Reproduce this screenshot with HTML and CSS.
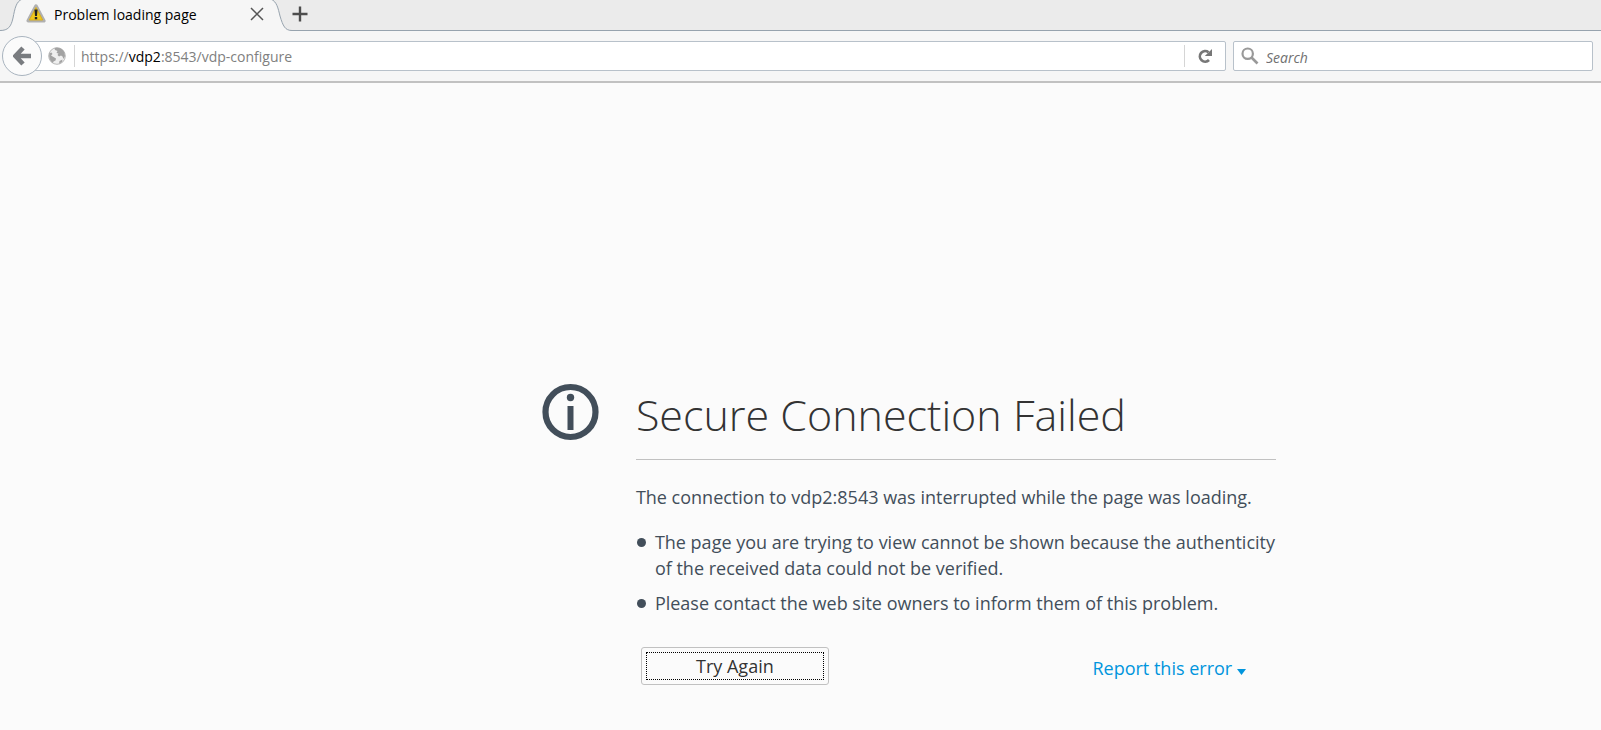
FILE: index.html
```html
<!DOCTYPE html>
<html lang="en">
<head>
<meta charset="utf-8">
<title>Problem loading page</title>
<link rel="stylesheet" href="styles.css">
</head>
<body>
<header class="chrome">
  <div class="tabstrip">
    <div class="tab">
      <svg class="tab-shape" width="300" height="31" viewBox="0 0 300 31" aria-hidden="true">
        <path fill="#f6f6f6" d="M0 31V30.500C8 30.500 10 27 13 18C15 8 16 2 22 0H271C277 2 278 8 280 16C283 26 285 30.500 292 30.500V31Z"/>
        <path fill="none" stroke="#97a3ae" d="M0 30.500C8 30.500 11 27 13 18C15 8 16 2 22 -1M271 -1C277 2 278 8 280 16C283 26 285 30.500 292 30.500H300"/>
      </svg>
      <svg class="tab-icon" width="20" height="20" viewBox="0 0 20 20" aria-hidden="true">
        <path d="M10 2.200L17.800 16.800H2.200Z" fill="#b5b5b5" stroke="#b0b0b0" stroke-width="3.600" stroke-linejoin="round"/>
        <path d="M10 3.500L16.700 16H3.300Z" fill="#f0c81c" stroke="#d9ae1d" stroke-linejoin="round"/>
        <path d="M8.500 5.500H11.500L11 12H9ZM8.800 13H11.200V15.300H8.800Z" fill="#222"/>
      </svg>
      <span class="tab-title">Problem loading page</span>
      <button class="icon-button" type="button" aria-label="Close tab">
        <svg width="14" height="14" viewBox="0 0 14 14"><path d="M1 1L13 13M13 1L1 13" stroke="#555" stroke-width="1.500" fill="none"/></svg>
      </button>
    </div>
    <button class="icon-button" type="button" aria-label="New tab">
      <svg width="16" height="16" viewBox="0 0 16 16"><path d="M8 0.500V15.500M0.500 8H15.500" stroke="#4d4d4d" stroke-width="2.400" fill="none"/></svg>
    </button>
  </div>
  <div class="toolbar">
    <button class="back" type="button" aria-label="Back">
      <svg width="18" height="20" viewBox="0 0 18 20"><path d="M10 2L2.500 10L10 18M3 10H18" fill="none" stroke="#797c80" stroke-width="4.600"/></svg>
    </button>
    <div class="urlbar">
      <svg class="globe" width="18" height="18" viewBox="0 0 18 18" aria-hidden="true">
        <circle cx="9" cy="9" r="8.300" fill="#efefef" stroke="#b8b8b8"/>
        <path fill="#a3a3a3" d="M6.500 1.200C10 0 14.500 1.500 16.300 5L17 9L15.500 12L14.500 9.500L13 8.500L11 9.500L9.500 8L10.500 6.500L8.500 6L9.500 4L7 3ZM1.500 6L3.500 5.500L4.500 7L3 8.500L5.500 10L8 11.500L7.500 13.500L5.500 14.500L5 16C2 14 0.500 10 1.500 6ZM11.500 14L14.500 12.500L14 15L11 16.800Z"/>
      </svg>
      <div class="address" role="textbox" aria-label="Address" tabindex="0">https://<span class="host">vdp2</span>:8543/vdp-configure</div>
      <button class="reload" type="button" aria-label="Reload">
        <svg width="16" height="16" viewBox="0 0 16 16"><path d="M11.500 4.200A5.300 5.300 0 1 0 12 12" fill="none" stroke="#777" stroke-width="2.700"/><path d="M15 1V8H7.800Z" fill="#777"/></svg>
      </button>
    </div>
    <label class="searchbar">
      <svg width="18" height="18" viewBox="0 0 18 18" aria-hidden="true"><circle cx="6.700" cy="6.700" r="5.200" fill="none" stroke="#999" stroke-width="2.200"/><path d="M10.500 10.500L16.500 16.500" stroke="#999" stroke-width="2.700"/></svg>
      <input class="search-input" type="search" placeholder="Search" aria-label="Search">
    </label>
  </div>
</header>
<main class="page">
  <section class="error">
    <svg class="info" width="58" height="58" viewBox="0 0 58 58" aria-hidden="true">
      <circle cx="28.500" cy="29" r="25" fill="none" stroke="#424e5a" stroke-width="6.200"/>
      <circle cx="28.500" cy="14.500" r="3.700" fill="#424e5a"/>
      <path d="M25.500 23H31.500V47H25.500Z" fill="#424e5a"/>
    </svg>
    <div class="details">
      <h1 class="title">Secure Connection Failed</h1>
      <p class="summary">The connection to vdp2:8543 was interrupted while the page was loading.</p>
      <ul class="reasons">
        <li>The page you are trying to view cannot be shown because the authenticity of the received data could not be verified.</li>
        <li>Please contact the web site owners to inform them of this problem.</li>
      </ul>
      <div class="actions">
        <button class="retry" type="button"><span class="retry-label">Try Again</span></button>
        <a class="report" href="#report">Report this error <svg width="9" height="6" viewBox="0 0 9 6" aria-hidden="true"><path d="M0 0H9L4.500 6Z" fill="#0095dd"/></svg></a>
      </div>
    </div>
  </section>
</main>
</body>
</html>
```
FILE: styles.css
```css
* {
  box-sizing: border-box;
}

body {
  margin: 0;
  background: #fbfbfb;
  color: #424e5a;
  font-family: "Open Sans", "Noto Sans", sans-serif;
  font-size: 18px;
}

button {
  margin: 0;
  padding: 0;
  border: 0;
  background: none;
  font: inherit;
}

svg {
  flex: none;
}

.chrome {
  background: #f6f6f6;
  border-bottom: 2px solid #c1c1c1;
  font-size: 14px;
}

.tabstrip {
  display: flex;
  align-items: center;
  height: 31px;
  background: #ebebeb;
  border-bottom: 1px solid #97a3ae;
}

.tab {
  position: relative;
  display: flex;
  align-items: center;
  width: 292px;
  height: 31px;
  padding: 0 28px 2px 26px;
  gap: 8px;
}

.tab-shape {
  position: absolute;
  top: 0;
  left: 0;
}

.tab-icon,
.tab-title,
.tab .icon-button {
  position: relative;
}

.tab-title {
  flex: 1;
  color: #000;
}

.icon-button {
  display: flex;
}

.tabstrip > .icon-button {
  padding-bottom: 2px;
}

.toolbar {
  display: flex;
  align-items: center;
  height: 50px;
  padding: 0 8px 0 2px;
}

.back {
  position: relative;
  display: flex;
  flex: none;
  align-items: center;
  justify-content: center;
  width: 40px;
  height: 40px;
  margin-right: -8px;
  border: 1px solid #a9b4bf;
  border-radius: 50%;
  background: #fbfbfb;
}

.urlbar,
.searchbar {
  display: flex;
  align-items: center;
  height: 30px;
  border: 1px solid #b8c1ca;
  border-radius: 2px;
  background: #fff;
}

.urlbar {
  flex: 1;
  padding-left: 13px;
  margin-right: 7px;
}

.address {
  flex: 1;
  margin-left: 8px;
  padding: 2px 0 0 6px;
  border-left: 1px solid #d5d5d5;
  color: #808080;
  line-height: 20px;
}

.host {
  color: #000;
}

.reload {
  display: flex;
  align-items: center;
  justify-content: center;
  width: 41px;
  height: 22px;
  border-left: 1px solid #d5d5d5;
}

.searchbar {
  flex: 0 1 360px;
  gap: 7px;
  padding: 0 7px;
}

.search-input {
  flex: 1;
  min-width: 0;
  padding: 2px 0 0;
  border: 0;
  outline: 0;
  background: none;
  font: inherit;
}

.search-input::placeholder {
  color: #707070;
  font-style: italic;
  opacity: 1;
}

.page {
  display: grid;
  grid-template-columns: 5fr minmax(0, 734px) 3fr;
  padding: 300px 0 40px;
}

.error {
  grid-column: 2;
  display: flex;
  gap: 36px;
}

.details {
  flex: 1;
}

.title {
  margin: 0;
  padding-bottom: 13px;
  border-bottom: 1px solid #c1c1c1;
  color: #333;
  font-size: 43px;
  font-weight: 300;
  line-height: 63px;
}

.summary {
  margin: 24px 0 19px;
  line-height: 26px;
}

.reasons {
  margin: 0;
  padding: 0;
  list-style: none;
  line-height: 26px;
}

.reasons li {
  position: relative;
  margin-bottom: 9px;
  padding-left: 19px;
}

.reasons li::before {
  content: "";
  position: absolute;
  top: 9px;
  left: 1px;
  width: 9px;
  height: 9px;
  border-radius: 50%;
  background: #424e5a;
}

.actions {
  display: flex;
  align-items: center;
  justify-content: space-between;
  margin-top: 31px;
  padding: 0 30px 0 5px;
}

.retry {
  width: 188px;
  padding: 4px;
  border: 1px solid #c1c1c1;
  border-radius: 3px;
  color: #333;
}

.retry-label {
  display: block;
  border: 1px dotted #000;
  line-height: 26px;
}

.report {
  padding-top: 4px;
  color: #0095dd;
  text-decoration: none;
}
```
